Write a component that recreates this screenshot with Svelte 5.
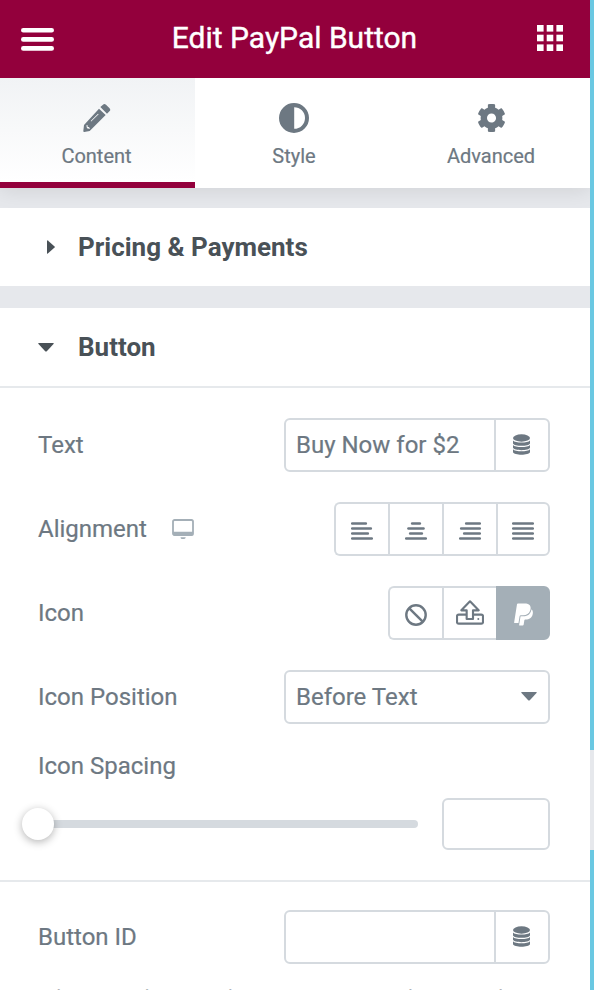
<script>
    let text = $state('Buy Now for $2');
    let buttonId = $state('');
    let spacing = $state('');
    let activeTab = $state('content');
    let activeIcon = $state('paypal');

    const tabs = [
        { id: 'content', label: 'Content' },
        { id: 'style', label: 'Style' },
        { id: 'advanced', label: 'Advanced' },
    ];

    // [start, end] of each of the four strokes
    const alignments = [
        { id: 'left', lines: [[0, 16], [0, 21], [0, 18], [0, 22]] },
        { id: 'center', lines: [[6, 16], [2.3, 19.7], [4, 18], [0, 22]] },
        { id: 'right', lines: [[6, 22], [1, 22], [4, 22], [0, 22]] },
        { id: 'justify', lines: [[0, 22], [0, 22], [0, 22], [0, 22]] },
    ];
</script>

{#snippet database()}
    <svg class="database" viewBox="0 0 17 21" width="17" height="21">
        <ellipse cx="8.5" cy="4" rx="8.5" ry="3.7" />
        <path d="M0 6.4C2 9.1 15 9.1 17 6.4V9.4C16 12.5 1 12.5 0 9.4z" />
        <path d="M0 10.9C2 13.6 15 13.6 17 10.9V13.8C16 16.9 1 16.9 0 13.8z" />
        <path d="M0 15.3C2 18 15 18 17 15.3V18.2C16 21.5 1 21.5 0 18.2z" />
    </svg>
{/snippet}

<div class="editor">
    <div class="panel">
        <header>
            <button class="menu" aria-label="Menu">
                <svg viewBox="0 0 33 23" width="33" height="23">
                    <path d="M2.3 2.3H30.7M2.3 11.4H30.7M2.3 20.4H30.7" stroke="#fff" stroke-width="4.6" stroke-linecap="round" />
                </svg>
            </button>
            <h1>Edit PayPal Button</h1>
            <button class="widgets" aria-label="Widgets">
                <svg viewBox="0 0 26 26" width="26" height="26" fill="#fff">
                    {#each [0, 9.7, 19.4] as y}
                        {#each [0, 9.7, 19.4] as x}
                            <rect {x} {y} width="6.6" height="6.6" />
                        {/each}
                    {/each}
                </svg>
            </button>
        </header>

        <nav>
            {#each tabs as tab}
                <button class="tab" class:active={activeTab === tab.id} onclick={() => (activeTab = tab.id)}>
                    {#if tab.id === 'content'}
                        <svg viewBox="248 310 84 90" width="28" height="30">
                            <path d="M300 322L308 315Q312 311 317 315L327 325Q332 330 328 334L320 342z" />
                            <path fill-rule="evenodd" d="M296 327L316 346L268 394L252 397Q248 397 249 393L251 376zM293 342L271 364L272.5 365.5L295 343.5zM258 377L260 386L269 388L266 382L262 382L262 377z" />
                        </svg>
                    {:else if tab.id === 'style'}
                        <svg viewBox="0 0 30 30" width="30" height="30">
                            <path fill-rule="evenodd" d="M15 0A15 15 0 0 1 15 30A15 15 0 0 1 15 0zM15.2 4.2V25.8A10.8 10.8 0 0 0 15.2 4.2z" />
                        </svg>
                    {:else}
                        <svg viewBox="0 0 512 512" width="29" height="29">
                            <path d="M487.4 315.7l-42.6-24.6c4.3-23.2 4.3-47 0-70.2l42.6-24.6c4.9-2.8 7.1-8.6 5.5-14-11.1-35.6-30-67.8-54.7-94.6-3.8-4.1-10-5.1-14.8-2.3L380.8 110c-17.9-15.4-38.5-27.3-60.8-35.1V25.8c0-5.6-3.9-10.5-9.4-11.7-36.7-8.2-74.3-7.8-109.2 0-5.5 1.2-9.4 6.1-9.4 11.7V75c-22.2 7.9-42.8 19.8-60.8 35.1L88.7 85.5c-4.9-2.8-11-1.9-14.8 2.3-24.7 26.7-43.6 58.9-54.7 94.6-1.7 5.4.6 11.2 5.5 14L67.3 221c-4.3 23.2-4.3 47 0 70.2l-42.6 24.6c-4.9 2.8-7.1 8.6-5.5 14 11.1 35.6 30 67.8 54.7 94.6 3.8 4.1 10 5.1 14.8 2.3l42.6-24.6c17.9 15.4 38.5 27.3 60.8 35.1v49.2c0 5.6 3.9 10.5 9.4 11.7 36.7 8.2 74.3 7.8 109.2 0 5.5-1.2 9.4-6.1 9.4-11.7v-49.2c22.2-7.9 42.8-19.8 60.8-35.1l42.6 24.6c4.9 2.8 11 1.9 14.8-2.3 24.7-26.7 43.6-58.9 54.7-94.6 1.5-5.5-.7-11.3-5.6-14.1zM256 336c-44.1 0-80-35.9-80-80s35.9-80 80-80 80 35.9 80 80-35.9 80-80 80z" />
                        </svg>
                    {/if}
                    <span>{tab.label}</span>
                </button>
            {/each}
        </nav>

        <section>
            <h2>
                <svg class="closed" viewBox="0 0 8 14" width="8" height="14"><path d="M0 .8Q0 0 .8.5L7.6 6.4Q8.2 7 7.6 7.6L.8 13.5Q0 14 0 13.2z" /></svg>
                Pricing &amp; Payments
            </h2>
        </section>

        <section>
            <h2 class="open">
                <svg viewBox="0 0 16 9" width="16" height="9"><path d="M.8 0H15.2Q16.2.2 15.5 1L8.8 8.2Q8 9 7.2 8.2L.5 1Q-.2.2.8 0z" /></svg>
                Button
            </h2>

            <div class="controls">
                <div class="control">
                    <label for="text">Text</label>
                    <div class="dynamic">
                        <input id="text" bind:value={text}>
                        <button aria-label="Dynamic tags">{@render database()}</button>
                    </div>
                </div>

                <div class="control">
                    <span class="label">Alignment</span>
                    <svg class="device" viewBox="0 0 22 20" width="22" height="20">
                        <rect x="1" y="1" width="20" height="15" rx="1.6" fill="none" stroke="#a4afb7" stroke-width="1.8" />
                        <path d="M1 12.8H21V15.6Q21 16.5 20 16.5H2Q1 16.5 1 15.6zM8.6 18.2H13.6V19Q13 20 12 20H10Q9 20 8.6 19z" fill="#a4afb7" />
                    </svg>
                    <div class="choices">
                        {#each alignments as align}
                            <button aria-label={align.id}>
                                <svg class="lines" viewBox="0 0 22 18" width="22" height="18">
                                    {#each align.lines as [from, to], i}
                                        <path d="M{from + 1.1} {1.5 + i * 5}H{to - 1.1}" stroke="#6d7882" stroke-width="2.4" stroke-linecap="round" />
                                    {/each}
                                </svg>
                            </button>
                        {/each}
                    </div>
                </div>

                <div class="control">
                    <span class="label">Icon</span>
                    <div class="choices">
                        <button aria-label="None" class:selected={activeIcon === 'none'} onclick={() => (activeIcon = 'none')}>
                            <svg class="ban" viewBox="0 0 22 22" width="22" height="22" stroke="currentColor" stroke-width="2.4">
                                <circle cx="11" cy="11" r="9.7" />
                                <path d="M4.1 4.1L17.9 17.9" />
                            </svg>
                        </button>
                        <button aria-label="Upload SVG" class:selected={activeIcon === 'upload'} onclick={() => (activeIcon = 'upload')}>
                            <svg class="upload" viewBox="258 90 84 75" width="28" height="25" stroke="currentColor" stroke-width="6.4" stroke-linejoin="round">
                                <path d="M290 134H266Q261 134 261 139V156Q261 161 266 161H334Q339 161 339 156V139Q339 134 334 134H309" />
                                <path d="M300 94L326 121H309V147H290V121H274z" />
                                <circle cx="325" cy="147" r="3" fill="currentColor" stroke="none" />
                            </svg>
                        </button>
                        <button aria-label="PayPal" class:selected={activeIcon === 'paypal'} onclick={() => (activeIcon = 'paypal')}>
                            <svg class="paypal" viewBox="0 0 384 512" width="19" height="25">
                                <path d="M111.4 295.9c-3.5 19.2-17.4 108.7-21.5 134-.3 1.8-1 2.5-3 2.5H12.3c-7.6 0-13.1-6.6-12.1-13.9L58.8 46.6c1.5-9.6 10.1-16.9 20-16.9 152.3 0 165.1-3.7 204 11.4 60.1 23.3 65.6 79.5 44 140.3-21.5 62.6-72.5 89.5-140.1 90.3-43.4.7-69.5-7-75.3 24.2zM357.1 152c-1.8-1.3-2.5-1.8-3 1.3-2 11.4-5.1 22.5-8.8 33.6-39.9 113.8-150.5 103.9-204.5 103.9-6.1 0-10.1 3.3-10.9 9.4-22.6 140.4-27.1 169.7-27.1 169.7-1 7.1 3.5 12.9 10.6 12.9h63.5c8.6 0 15.7-6.3 17.4-14.9.7-5.4-1.1 6.1 14.4-91.3 4.6-22 14.3-19.7 29.3-19.7 71 0 126.4-28.8 142.9-112.3 6.5-34.8 4.6-71.4-23.8-92.6z" />
                            </svg>
                        </button>
                    </div>
                </div>

                <div class="control">
                    <span class="label">Icon Position</span>
                    <button class="select">
                        Before Text
                        <svg viewBox="0 0 16 9" width="16" height="9"><path d="M.8 0H15.2Q16.2.2 15.5 1L8.8 8.2Q8 9 7.2 8.2L.5 1Q-.2.2.8 0z" /></svg>
                    </button>
                </div>

                <div class="control stacked">
                    <label for="spacing">Icon Spacing</label>
                    <div class="slider">
                        <div class="track"><div class="handle"></div></div>
                        <input id="spacing" bind:value={spacing}>
                    </div>
                </div>
            </div>

            <div class="controls last">
                <div class="control">
                    <label for="button-id">Button ID</label>
                    <div class="dynamic">
                        <input id="button-id" bind:value={buttonId}>
                        <button aria-label="Dynamic tags">{@render database()}</button>
                    </div>
                </div>
                <p>Please make sure the ID is unique and not used elsewhere on the page this form is displayed.</p>
            </div>
        </section>
    </div>

    <div class="preview"><div class="resizer"></div></div>
</div>

<style>
    :global(body) {
        overflow: hidden;
    }

    .editor {
        display: flex;
        width: 594px;
        height: 990px;
        overflow: hidden;
        font-family: Roboto, "Liberation Sans", sans-serif;
        font-size: 24px;
        color: #6d7882;
    }

    .editor * {
        box-sizing: border-box;
    }

    .panel {
        width: 590px;
        height: 990px;
        overflow: hidden;
        background: #e6e8ec;
    }

    button, input, label, .label {
        -webkit-text-stroke: 0.2px;
    }

    button, input {
        font: inherit;
        color: inherit;
        padding: 0;
        margin: 0;
        border: none;
        background: none;
        outline: none;
    }

    svg {
        display: block;
        fill: currentColor;
        flex: none;
    }

    header {
        position: relative;
        z-index: 1;
        display: flex;
        align-items: center;
        justify-content: space-between;
        height: 78px;
        padding: 0 27px 2px 21px;
        background: #93003c;
        color: #fff;
    }

    .menu {
        padding-top: 2px;
    }

    h1 {
        margin: 0 2px 2px 0;
        font-size: 30px;
        font-weight: 400;
        -webkit-text-stroke: 0.4px;
    }

    nav {
        display: grid;
        grid-template-columns: 195px 198px 197px;
        height: 110px;
        margin-bottom: 20px;
        background: #fff;
        box-shadow: 0 2px 20px rgba(0, 0, 0, .1);
    }

    .tab {
        display: flex;
        flex-direction: column;
        align-items: center;
        padding-top: 25px;
        font-size: 20px;
        line-height: 24px;
    }

    .tab:last-child {
        padding-right: 1px;
    }

    .tab svg {
        height: 30px;
    }

    .tab span {
        margin-top: 11px;
    }

    .active {
        padding-right: 2px;
        border-bottom: 6px solid #93003c;
        background: linear-gradient(#f1f3f5, #fff);
    }

    section {
        margin-bottom: 22px;
        background: #fff;
    }

    h2 {
        display: flex;
        align-items: center;
        gap: 24px;
        height: 78px;
        margin: 0;
        padding-left: 38px;
        font-size: 26px;
        font-weight: 700;
        color: #495157;
    }

    h2 .closed {
        margin: 0 -1px 0 9px;
    }

    .open {
        height: 80px;
        border-bottom: 2px solid #e6e9ec;
    }

    .controls {
        display: flex;
        flex-direction: column;
        gap: 30px;
        padding: 30px 40px 30px 38px;
    }

    .last {
        gap: 20.6px;
        padding-top: 28px;
        border-top: 2px solid #e6e9ec;
    }

    .control {
        display: flex;
        align-items: center;
        height: 54px;
    }

    .control > label, .label {
        line-height: 24px;
    }

    .dynamic, .choices, .select {
        margin-left: auto;
    }

    .dynamic {
        display: flex;
        width: 266px;
        height: 54px;
        border: 2px solid #d5dadf;
        border-radius: 6px;
    }

    .dynamic input {
        width: 208px;
        padding-left: 10px;
    }

    .dynamic button {
        display: grid;
        place-items: center;
        width: 54px;
        padding: 0 1px 1px 0;
        border-left: 2px solid #d5dadf;
    }

    .device {
        margin-left: 25px;
    }

    .choices {
        display: flex;
    }

    .choices button {
        display: grid;
        place-items: center;
        width: 54px;
        height: 54px;
        border: 2px solid #d5dadf;
        border-right-width: 0;
    }

    .choices button:first-child {
        border-radius: 6px 0 0 6px;
    }

    .choices button:last-child {
        border-right-width: 2px;
        border-radius: 0 6px 6px 0;
    }

    .choices .selected {
        border-color: #a4afb7;
        background: #a4afb7;
        color: #fff;
    }

    .lines {
        margin-top: 3px;
    }

    .paypal {
        margin-top: 2px;
    }

    .ban {
        margin-top: 3px;
    }

    .upload {
        margin-bottom: 2px;
    }

    .upload, .ban {
        fill: none;
    }

    .select {
        display: flex;
        align-items: center;
        justify-content: space-between;
        width: 266px;
        height: 54px;
        padding: 0 11px 0 10px;
        border: 2px solid #d5dadf;
        border-radius: 6px;
    }

    .select svg {
        margin-top: -1px;
    }

    .stacked {
        flex-direction: column;
        align-items: stretch;
        gap: 20px;
        height: 96px;
    }

    .slider {
        display: flex;
        align-items: center;
        justify-content: space-between;
    }

    .track {
        display: flex;
        align-items: center;
        width: 380px;
        height: 8px;
        border-radius: 4px;
        background: #d5dadf;
    }

    .handle {
        width: 32px;
        height: 32px;
        margin-left: -16px;
        border-radius: 50%;
        background: #fff;
        box-shadow: 0 2px 8px rgba(0, 0, 0, .3);
    }

    .slider input {
        width: 108px;
        height: 52px;
        border: 2px solid #d5dadf;
        border-radius: 6px;
    }

    /* slanted upright face, keeps the regular letter widths */
    p {
        margin: 0;
        font-size: 22px;
        line-height: 28px;
        color: #6d7882;
        transform: skewX(-14deg);
        transform-origin: 0 21px;
    }

    .preview {
        width: 4px;
        padding-top: 750px;
        background: #6ac8e2;
    }

    .resizer {
        height: 100px;
        background: #e6e8ec;
    }
</style>
